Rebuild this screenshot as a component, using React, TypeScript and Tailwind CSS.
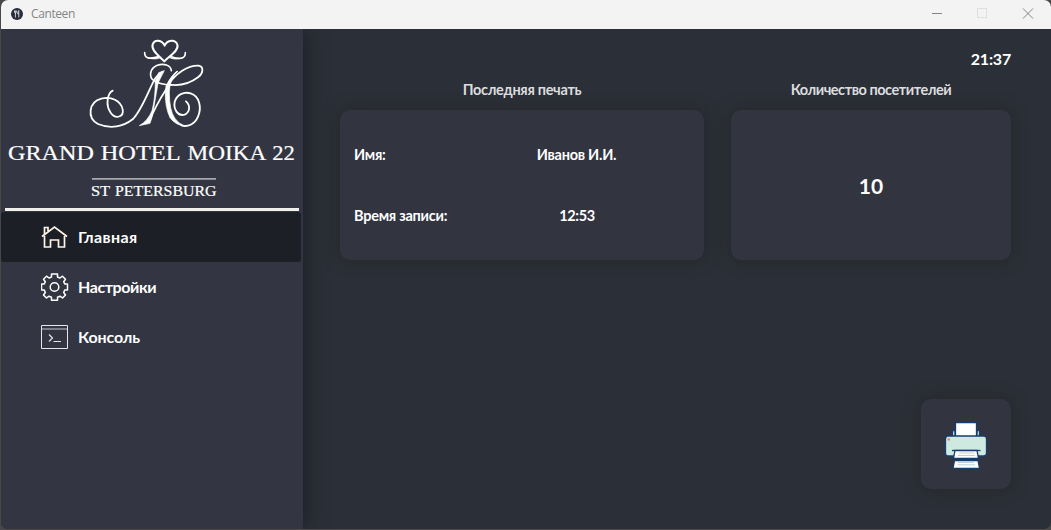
import type { ReactNode } from "react";

function Monogram() {
  return (
    <svg className="block h-[110px] w-[160px]" viewBox="0 0 480 330" fill="none" stroke="#fff" strokeLinecap="round" strokeLinejoin="round">
      {/* heart and side leaves */}
      <path strokeWidth="6" d="M283 94C270 80 242 62 248 43C254 27 276 29 284 47C292 29 316 27 322 44C328 62 298 78 283 94" />
      <path strokeWidth="5" d="M224 68C224 86 240 88 266 80M346 68C347 86 330 89 304 80" />
      <path fill="#fff" strokeWidth="2" d="M234 84Q252 86 274 82Q258 91 234 84ZM336 85Q318 86 296 82Q312 91 336 85Z" />
      {/* left flourish and first stem */}
      <path strokeWidth="5.500" d="M128 182C112 190 106 226 122 248C138 270 162 260 158 238C152 212 124 198 94 206C56 216 50 264 84 282C122 298 160 290 188 268C216 240 236 180 254 148C260 138 268 130 278 126" />
      <path strokeWidth="5" d="M304 122C302 104 280 100 262 106C238 116 236 142 252 152C264 162 284 164 304 165" />
      <path fill="#fff" strokeWidth="2" d="M282 122L266 128L256 152Q256 205 246 242Q234 272 208 287L240 280Q248 262 252 230L264 160Z" />
      {/* diagonal and heavy right stem */}
      <path strokeWidth="5" d="M236 276C256 234 272 196 300 164" />
      <path strokeWidth="4" d="M290 170C298 150 308 134 322 124" />
      <path fill="#fff" strokeWidth="2" d="M322 124Q298 150 298 188Q298 240 314 264Q324 280 344 288Q316 285 300 263Q284 230 286 180Q287 156 322 124Z" />
      {/* upper loop and right spiral */}
      <path strokeWidth="5.500" d="M290 170C318 128 354 106 386 107C402 110 400 130 384 142C358 162 326 168 298 164" />
      <path strokeWidth="5.500" d="M348 214C362 226 360 246 344 254C324 260 310 238 314 216C320 194 342 184 362 190C388 198 396 232 384 260C374 284 352 292 334 286" />
    </svg>
  );
}

function HotelLogo() {
  return (
    <div className="flex h-[179px] shrink-0 flex-col pt-px">
      <div className="pl-[69px]"><Monogram /></div>
      <svg className="block h-[69px] w-[302px]" viewBox="0 0 302 69" fill="#fff" stroke="#fff" strokeWidth=".2" fontFamily="Liberation Serif, serif">
        <g fontSize="20.500">
          <text x="5" y="20.500" textLength="87" lengthAdjust="spacingAndGlyphs">GRAND</text>
          <text x="99" y="20.500" textLength="81" lengthAdjust="spacingAndGlyphs">HOTEL</text>
          <text x="187" y="20.500" textLength="80" lengthAdjust="spacingAndGlyphs">MOIKA</text>
          <text x="273" y="20.500" textLength="23" lengthAdjust="spacingAndGlyphs">22</text>
        </g>
        <rect x="90" y="39" width="126" height="1" stroke="none" />
        <g fontSize="14.500">
          <text x="89" y="56.500" textLength="19.500" lengthAdjust="spacingAndGlyphs">ST</text>
          <text x="113.500" y="56.500" textLength="103" lengthAdjust="spacingAndGlyphs">PETERSBURG</text>
        </g>
      </svg>
    </div>
  );
}

function HomeIcon() {
  return (
    <svg className="size-7" viewBox="0 0 28 28" fill="none" stroke="#fff4e8" strokeWidth="1.700">
      <path d="M1 13.500L13.500 4L26 13.500M3.500 11V4.500H7V8M3.500 13V24H9.500V17H17.500V24H23.500V13" />
    </svg>
  );
}

function GearIcon() {
  return (
    <svg className="size-7" viewBox="0.500 0 28 28" fill="none" stroke="#fff" strokeWidth="1.500" strokeLinejoin="round">
      <path d="M11 1H17V4L19.500 5L22 3.200L25 6.200L23.200 8.800L24.200 11H27V17H24.200L23.200 19.500L25 22L22 25L19.500 23.200L17 24.200V27.200H11V24.200L8.500 23.200L6 25L3 22L4.800 19.500L3.800 17H1V11H3.800L4.800 8.800L3 6.200L6 3.200L8.500 5L11 4Z" />
      <circle cx="14" cy="14" r="4.300" />
    </svg>
  );
}

function ConsoleIcon() {
  return (
    <svg className="size-7" viewBox="0 0 28 28" fill="none" stroke="#e4e6e9" strokeWidth="1">
      <path d="M.5 2.500H26.500V25.500H.5Z" />
      <path d="M1 6H26" stroke="#a4a7ae" strokeWidth="1.300" />
      <path d="M8 11.500L11.500 15L8 18.500M12.500 18.500H20" strokeWidth="1.200" />
    </svg>
  );
}

function PrinterIcon() {
  return (
    <svg className="h-12 w-11" viewBox="0 0 44 48" stroke="#173d6d" strokeWidth="1.300">
      <path fill="#cde9e0" d="M8.500 15V9.500H11V15M33 15V9.500H35.500V15" />
      <path fill="#fff" d="M11.500 15V1.500H32.500V15" />
      <path fill="#cde9e0" d="M4 15H40Q42.500 15 42.500 18V32Q42.500 35 39.500 35H4.500Q1.500 35 1.500 32V18Q1.500 15 4 15Z" />
      <path d="M8 29.500H36.500" />
      <path fill="#fff" d="M11 29.500H33L34.500 37.500H9.500ZM10.500 39.500H34L35.500 47.300H9Z" />
      <path d="M15 32H30M14 34.500H31M14 41.500H30M13.500 43.800H31" stroke="#c7ced8" strokeWidth="1" />
      <circle cx="4.800" cy="18.500" r="1.200" fill="#f47c67" stroke="none" />
    </svg>
  );
}

function NavItem({ icon, active, tracking, children }: { icon: ReactNode; active?: boolean; tracking: string; children: ReactNode }) {
  return (
    <button className={active ? "flex h-[50px] w-[300px] items-center gap-[9px] rounded-[3px] bg-[#1d1f26] pl-10" : "flex h-[50px] w-[300px] items-center gap-[9px] pl-10"}>
      {icon}
      <span className={`whitespace-nowrap text-[16px] font-bold ${tracking}`}>{children}</span>
    </button>
  );
}

function Card({ title, width, tracking, children }: { title: string; width: string; tracking: string; children: ReactNode }) {
  return (
    <section className={width}>
      <h2 className={`flex h-5 items-center justify-center text-[14.5px] font-bold text-[#dcdddf] ${tracking}`}>{title}</h2>
      <div className="mt-[10px] h-[150px] rounded-[10px] bg-[#32343f] shadow-[0_0_16px_rgba(37,38,38,0.9)]">{children}</div>
    </section>
  );
}

export default function App() {
  return (
    <div className="h-[530px] w-[1051px] overflow-hidden bg-[#484848] pb-px pl-px font-['Lato',sans-serif] text-white">
      <div className="flex h-full flex-col overflow-hidden rounded-[7px] bg-[#2b2f37]">
        <header className="relative z-20 flex h-[29px] shrink-0 items-center bg-[#f3f3f3] pb-px text-[#858585]">
          <svg className="ml-[10px] size-3" viewBox="0 0 12 12">
            <circle cx="6" cy="6" r="6" fill="#292c3b" />
            <path d="M3.500 2.500V4.500Q4.500 6 5.300 4.500V2.500M4.400 2.500V9.500M7.800 9.500V2.500Q6.500 3.500 6.800 6H7.800" fill="none" stroke="#f3f3f3" strokeWidth=".8" />
          </svg>
          <span className="ml-2 font-['Open_Sans',sans-serif] text-[12px] tracking-[-0.4px]">Canteen</span>
          <svg className="ml-auto mr-[16px] h-7 w-[104px]" viewBox="0 0 104 28" fill="none" stroke="#858585">
            <path d="M1 13.500H11" />
            <rect x="46.500" y="8.500" width="9" height="9" stroke="#dfdfdf" />
            <path d="M92 8.500L102 18.500M102 8.500L92 18.500" />
          </svg>
        </header>
        <div className="flex min-h-0 flex-1">
          <aside className="relative z-10 flex w-[302px] shrink-0 flex-col bg-[#333642] shadow-[0_0_20px_rgba(18,18,20,0.65)]">
            <HotelLogo />
            <div className="mb-px ml-1 h-[3px] w-[294px] bg-[#eef0e9]" />
            <nav>
              <NavItem active tracking="tracking-[0.4px]" icon={<HomeIcon />}>Главная</NavItem>
              <NavItem tracking="tracking-[-0.4px]" icon={<GearIcon />}>Настройки</NavItem>
              <NavItem tracking="tracking-[-0.1px]" icon={<ConsoleIcon />}>Консоль</NavItem>
            </nav>
          </aside>
          <main className="flex min-w-0 flex-1 flex-col pb-10 pl-[37px] pr-10">
            <time className="mt-5 flex h-5 items-center justify-end text-[16px] font-bold tracking-[-0.2px]">21:37</time>
            <div className="mt-[11px] flex justify-between">
              <Card title="Последняя печать" width="w-[364px]" tracking="tracking-[-0.3px]">
                <dl className="grid h-full grid-cols-[109px_1fr] content-center gap-y-[41px] pl-[14px] text-[14.5px] font-bold leading-5 tracking-[-0.25px]">
                  <dt>Имя:</dt>
                  <dd className="pr-[14px] text-center">Иванов И.И.</dd>
                  <dt className="whitespace-nowrap">Время записи:</dt>
                  <dd className="pr-[13px] text-center tracking-[-0.4px]">12:53</dd>
                </dl>
              </Card>
              <Card title="Количество посетителей" width="w-[280px]" tracking="tracking-[-0.45px]">
                <div className="flex h-full items-center justify-center pt-0.5 text-[21px] font-bold">10</div>
              </Card>
            </div>
            <button aria-label="Печать" className="mt-auto flex size-[90px] items-center justify-center self-end rounded-[10px] bg-[#32343f] pt-0.5 shadow-[0_0_16px_rgba(37,38,38,0.9)]">
              <PrinterIcon />
            </button>
          </main>
        </div>
      </div>
    </div>
  );
}
